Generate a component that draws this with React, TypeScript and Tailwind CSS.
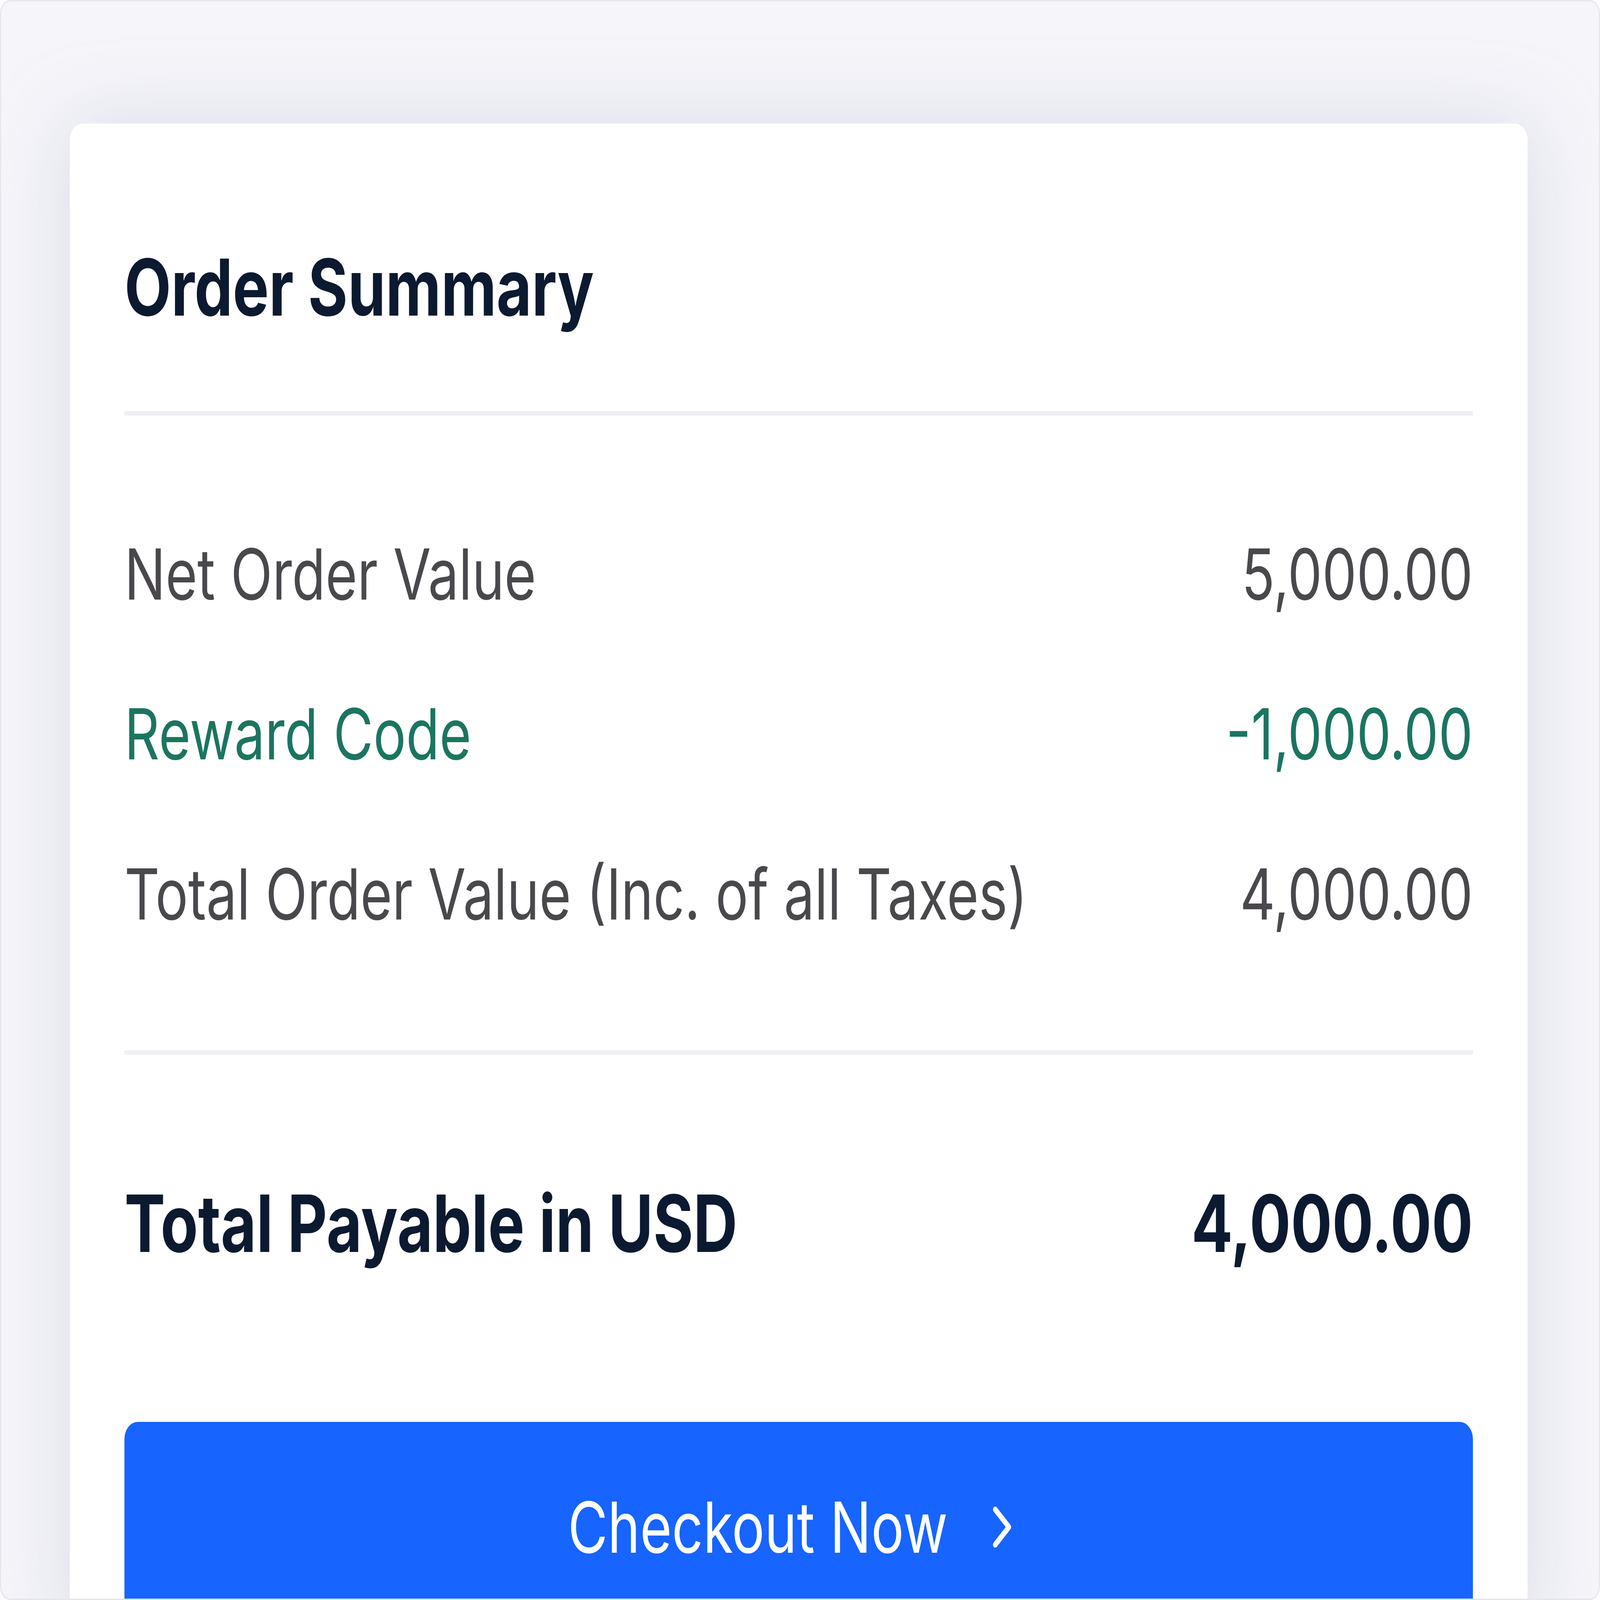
import { useLayoutEffect, useState } from "react";
import { ChevronRight } from "lucide-react";

const W = 6006;
const H = 4662;

const rows = [
  { label: "Net Order Value", value: "5,000.00", tone: "text-[#4a484c]" },
  { label: "Reward Code", value: "-1,000.00", tone: "text-[#1b7560]" },
  { label: "Total Order Value (Inc. of all Taxes)", value: "4,000.00", tone: "text-[#4a484c]" },
];

// the board is drawn at 6006x4662 and fitted to whatever window it gets
function useFit() {
  const [fit, setFit] = useState({ x: 1, y: 1 });
  useLayoutEffect(() => {
    const update = () => setFit({ x: window.innerWidth / W, y: window.innerHeight / H });
    update();
    window.addEventListener("resize", update);
    return () => window.removeEventListener("resize", update);
  }, []);
  return fit;
}

export default function App() {
  const fit = useFit();

  return (
    <div className="w-screen h-screen overflow-hidden">
      <div
        className="origin-top-left w-[6006px] h-[4662px] overflow-hidden bg-[#f5f5fa] border-[4px] border-[#e6e5ea] rounded-[40px] pl-[258px] pr-[268px] pt-[356px]"
        style={{ transform: `scale(${fit.x}, ${fit.y})`, fontFamily: "Inter, 'Noto Sans', sans-serif" }}
      >
        {/* Card */}
        <div className="h-[4400px] bg-white rounded-[48px] shadow-[0_0_260px_rgba(175,175,200,0.38)] px-[205px] pt-[298px]">
          {/* Title */}
          <h2 className="text-[228px] leading-[358px] font-bold text-[#0b1a30]">Order Summary</h2>

          <div className="h-[13px] bg-[#efeff4] mt-[182px]" />

          {/* Line items */}
          <div className="flex flex-col gap-[159px] pt-[308px] pb-[302px]">
            {rows.map((r) => (
              <div key={r.label} className={`flex items-center justify-between text-[205px] leading-[307px] ${r.tone}`}>
                <span>{r.label}</span>
                <span>{r.value}</span>
              </div>
            ))}
          </div>

          <div className="h-[13px] bg-[#efeff4]" />

          {/* Total */}
          <div className="flex items-center justify-between pt-[312px] text-[230px] leading-[358px] font-bold text-[#0b1a30]">
            <span>Total Payable in USD</span>
            <span>4,000.00</span>
          </div>

          {/* Checkout button */}
          <button className="mt-[400px] w-full flex items-center justify-center gap-[102px] bg-[#1764ff] text-white rounded-[50px] py-[153px] text-[205px] leading-[307px]">
            <span>Checkout Now</span>
            <ChevronRight size={205} strokeWidth={2} />
          </button>
        </div>
      </div>
    </div>
  );
}
